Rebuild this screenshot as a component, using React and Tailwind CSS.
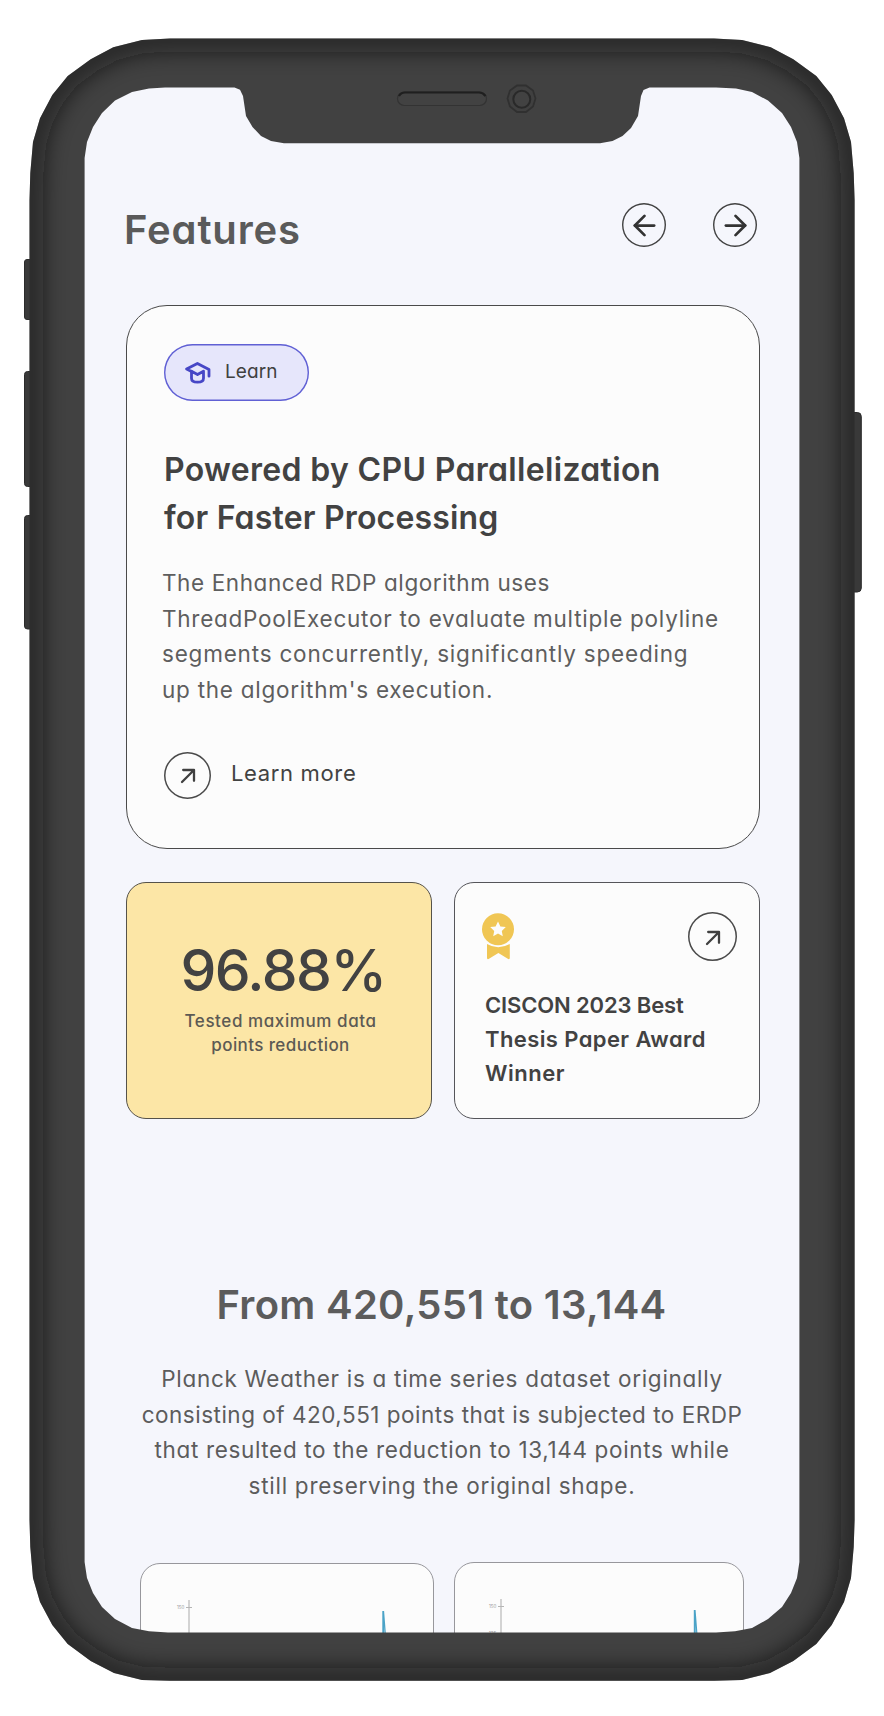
import { ArrowLeft, ArrowRight } from "lucide-react";

function Line({ children, className = "" }) {
  return <span className={`block whitespace-nowrap ${className}`}>{children}</span>;
}

function DiagonalArrow({ className }) {
  return (
    <svg viewBox="0 0 16 16" className={className} fill="none" stroke="#404040" strokeWidth="2.3" strokeLinecap="round" strokeLinejoin="round">
      <path d="M2 14 14 2M3.2 2H14v10.8" />
    </svg>
  );
}

function CapIcon() {
  return (
    <svg viewBox="0 0 26 23" className="h-[23px] w-[26px]" fill="none" stroke="#4747c6" strokeWidth="2.8" strokeLinecap="round" strokeLinejoin="round">
      <path d="M24 15.2V8.6L12.4 2.4 1.6 8l4.9 2.5" />
      <path d="M6.5 10.2v7q0 4 6 4t6-4v-7l-6 3.3Z" />
    </svg>
  );
}

function Medal() {
  return (
    <svg viewBox="0 0 32 47" className="h-[47px] w-8" fill="#f0c654">
      <circle cx="16" cy="16.2" r="16" />
      <path fill="#fcfcfc" d="m16 8.4 2.4 5 5.4.7-4 3.8 1 5.4-4.8-2.7-4.8 2.7 1-5.4-4-3.8 5.4-.7Z" />
      <path d="M5 31q11 6.5 22.8 0v14q0 1.6-1.6 1L16.4 40 6.6 46q-1.6.6-1.6-1Z" />
    </svg>
  );
}

function ChartCard({ className, axis, tick, spike, more }) {
  return (
    <div className={`h-[90px] rounded-t-[20px] border border-[#97979c] bg-[#fcfcfc] ${className}`}>
      <svg viewBox="0 0 290 90" className="block h-[90px] w-[290px]">
        <path d={`M${axis} 36v54`} stroke="#c8c8c8" strokeWidth="1.6" />
        <path d={`M${axis - 3} ${tick}h6`} stroke="#b5b5b5" />
        <text x={axis - 12} y={tick + 1.5} fontSize="4.5" fill="#9a9a9a" fontFamily="Inter">150</text>
        {more && <text x={axis - 12} y={tick + 28} fontSize="4.5" fill="#9a9a9a" fontFamily="Inter">125</text>}
        <path d={`M${spike - 1.2} 90V47h1.8L${spike + 4} 90h-2L${spike + 0.8} 62 ${spike + 0.6} 90Z`} fill="#4ba3c7" />
      </svg>
    </div>
  );
}

const SHELL =
  "M142 40 170 38.6H714L742 40 770.7 47.3 793.3 59.3 816.3 76 831.7 95 844 118.3 851 142 853.7 173 854.6 200V1520L853.7 1547 851 1578 844 1602 831.7 1625 816.3 1644 793.3 1661 770 1673 742 1680 714 1680.8H170L142 1680 114 1673 90.7 1661 67.7 1644 52.3 1625 40 1602 33 1578 30.3 1547 29.5 1520V200L30.3 173 33 142 40 118.3 52.3 95 67.7 76 90.7 59.3 113.3 47.3Z";
const SCREEN =
  "M165 87.4H234.5L240 89.8 243 96 246 116 252.5 127 261 136 271 141 284 143.2H600L612.5 141 622.5 136 631 128 638 116 641 96 643.5 90 649.5 87.4H716L736 88.6 752 92 768 100.5 782 113 791 127 797 142 799.4 158V1562L797 1578 791 1593 782 1607 768 1619 752 1628 735 1631.2 716 1632.4H168L149 1631.2 132 1628 115 1619 102 1607 93 1593 87 1578 84.6 1562V158L87 142 93 127 102 113 115 100.5 132 92 149 88.6Z";

function PhoneBezel() {
  return (
    <svg viewBox="0 0 884 1716" className="pointer-events-none absolute inset-0 h-[1716px] w-[884px]" aria-hidden="true">
      <defs>
        <clipPath id="shell">
          <path d={SHELL + SCREEN} clipRule="evenodd" />
        </clipPath>
        <filter id="soft" x="-10%" y="-10%" width="120%" height="120%">
          <feGaussianBlur stdDeviation="11" />
        </filter>
      </defs>
      <g fill="#393939" stroke="#2b2b2b" strokeWidth="1">
        <rect x="24.5" y="259.5" width="12" height="60" rx="2.5" />
        <rect x="24.5" y="371.5" width="12" height="115" rx="3" />
        <rect x="24.5" y="515.5" width="12" height="113.5" rx="3" />
        <rect x="848" y="412.5" width="13.3" height="179.5" rx="4" />
      </g>
      <path d={SHELL + SCREEN} fill="#414141" fillRule="evenodd" />
      <g clipPath="url(#shell)">
        <path d={SHELL} fill="none" stroke="#181818" strokeOpacity="0.62" strokeWidth="26" filter="url(#soft)" />
      </g>
      <rect x="397.5" y="92" width="89" height="13.5" rx="6.7" fill="#424242" stroke="#333333" strokeWidth="1.2" />
      <path d="M399 96q2-3.5 6-3.5h74q4 0 6.5 3.5" fill="none" stroke="#1f1f1f" strokeWidth="2.2" />
      <path d="m517 85.500h9l7 5 2.500 8-2.500 8-7 5.500h-9l-7-5.500-2.500-8 2.500-8Z" fill="#404040" stroke="#303030" strokeWidth="1.8" />
      <circle cx="521.8" cy="99.3" r="8.5" fill="#424242" stroke="#292929" strokeWidth="2" />
    </svg>
  );
}

export default function App() {
  return (
    <div className="relative h-[1716px] w-[884px] overflow-hidden bg-white px-20 pt-20 font-[Inter,'Liberation_Sans',sans-serif] text-[#424242] [font-feature-settings:'cv11']">
      <main className="h-[1560px] overflow-hidden rounded-[60px] bg-[#f5f6fc] pr-11 pl-[46px]">
        <header className="flex h-[167px] items-start justify-between pt-[122px] pr-[3px]">
          <h1 className="mt-[6px] -ml-[2px] text-[40px] leading-[44px] font-semibold tracking-[0.85px] text-[#5a5a5a]">Features</h1>
          <nav className="flex gap-[47px]">
            <button aria-label="Previous" className="mt-px flex size-11 items-center justify-center rounded-full text-[#333333] shadow-[inset_0_0_0_1.4px_#404040]">
              <ArrowLeft size={33} strokeWidth={2} />
            </button>
            <button aria-label="Next" className="mt-px flex size-11 items-center justify-center rounded-full text-[#333333] shadow-[inset_0_0_0_1.4px_#404040]">
              <ArrowRight size={33} strokeWidth={2} />
            </button>
          </nav>
        </header>

        <section className="mt-[58px] h-[544px] rounded-[41px] border border-[#4a4a4a] bg-[#fcfcfc] pt-[38px] pl-[37px]">
          <div className="flex h-[57px] w-[145px] items-center rounded-full bg-[#e6e6fb] pl-[21px] shadow-[inset_0_0_0_1.4px_#6060d4]">
            <CapIcon />
            <span className="-mt-px ml-[14px] text-[19px] tracking-[0.1px] text-[#404040]">Learn</span>
          </div>
          <h2 className="mt-[45px] text-[32px] leading-[48px] font-semibold">
            <Line className="tracking-[0.33px]">Powered by CPU Parallelization</Line>
            <Line className="tracking-[0.18px]">for Faster Processing</Line>
          </h2>
          <p className="mt-[23px] -ml-[2px] text-[22.5px] leading-[35.67px] text-[#5e5e5e]">
            <Line className="tracking-[0.59px]">The Enhanced RDP algorithm uses</Line>
            <Line className="tracking-[0.745px]">ThreadPoolExecutor to evaluate multiple polyline</Line>
            <Line className="tracking-[0.8px]">segments concurrently, significantly speeding</Line>
            <Line className="tracking-[0.75px]">up the algorithm's execution.</Line>
          </p>
          <a className="mt-11 flex items-center gap-5">
            <span className="flex size-[47px] items-center justify-center rounded-full shadow-[inset_0_0_0_1.5px_#4a4a4a]">
              <DiagonalArrow className="mt-0.5 ml-px size-4" />
            </span>
            <span className="-mt-[3px] text-[22px] tracking-[0.65px] [font-feature-settings:'cv11'_0]">Learn more</span>
          </a>
        </section>

        <div className="mt-[33px] flex gap-[22px]">
          <section className="h-[237px] w-[306px] rounded-[20px] border border-[#55524a] bg-[#fce6a6] pt-[58px] text-center">
            <div className="pl-[8px] text-[57px] leading-[60px] font-medium tracking-[-1.525px]">96.88%</div>
            <p className="mt-[8px] pl-[3px] text-[17px] leading-6 font-medium text-[#5c5a54]">
              <Line className="tracking-[0.58px]">Tested maximum data</Line>
              <Line className="tracking-[0.4px]">points reduction</Line>
            </p>
          </section>
          <section className="h-[237px] w-[306px] rounded-[20px] border border-[#55555a] bg-[#fcfcfc] pt-[30px] pr-[22px] pl-[27px]">
            <div className="flex items-start justify-between">
              <Medal />
              <span className="-mt-px flex size-[49px] items-center justify-center rounded-full shadow-[inset_0_0_0_1.5px_#4a4a4a]">
                <DiagonalArrow className="mt-0.5 ml-px size-4" />
              </span>
            </div>
            <h3 className="mt-[26.5px] ml-[3px] text-[22px] leading-[34px] font-semibold">
              <Line className="tracking-[-0.136px]">CISCON 2023 Best</Line>
              <Line className="tracking-[0.4px]">Thesis Paper Award</Line>
              <Line className="tracking-[0.51px]">Winner</Line>
            </h3>
          </section>
        </div>

        <section className="mt-[162px] text-center text-[#5c5c5c]">
          <h2 className="-ml-[3px] text-[40px] leading-[48px] font-semibold tracking-[0.29px]">From 420,551 to 13,144</h2>
          <p className="mt-8 -ml-[2px] text-[22.5px] leading-[35.67px]">
            <Line className="tracking-[0.71px]">Planck Weather is a time series dataset originally</Line>
            <Line className="tracking-[0.5px]">consisting of 420,551 points that is subjected to ERDP</Line>
            <Line className="tracking-[0.65px]">that resulted to the reduction to 13,144 points while</Line>
            <Line className="tracking-[0.73px]">still preserving the original shape.</Line>
          </p>
        </section>

        <div className="mt-[58px] flex gap-5 pl-[14px]">
          <ChartCard className="mt-px w-[294px]" axis={48} tick={43.5} spike={242.5} />
          <ChartCard className="w-[290px]" axis={46} tick={43.5} spike={240} more />
        </div>
      </main>
      <PhoneBezel />
    </div>
  );
}
